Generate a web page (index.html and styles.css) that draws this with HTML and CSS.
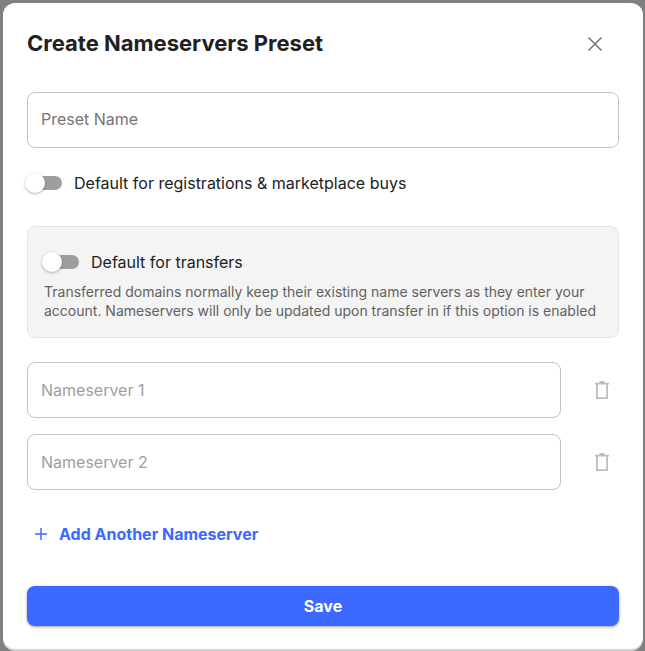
FILE: index.html
```html
<!DOCTYPE html>
<html lang="en">
<head>
<meta charset="utf-8">
<title>Create Nameservers Preset</title>
<link rel="stylesheet" href="styles.css">
</head>
<body>
<div class="modal">
  <header class="head">
    <h1 class="title">Create Nameservers Preset</h1>
    <button class="close" aria-label="Close">
      <svg width="16" height="16" viewBox="0 0 16 16"><path d="M1.500 1.500l13 13M14.500 1.500l-13 13" stroke="#757575" stroke-width="1.500" fill="none"/></svg>
    </button>
  </header>
  <div class="field name">Preset Name</div>
  <div class="toggle-row first">
    <span class="toggle"><span class="knob"></span></span>
    <span class="toggle-label">Default for registrations &amp; marketplace buys</span>
  </div>
  <section class="panel">
    <div class="toggle-row">
      <span class="toggle"><span class="knob"></span></span>
      <span class="toggle-label">Default for transfers</span>
    </div>
    <p class="note">Transferred domains normally keep their existing name servers as they enter your account. Nameservers will only be updated upon transfer in if this option is enabled</p>
  </section>
  <div class="ns-list">
    <div class="ns-row">
      <div class="field ns">Nameserver 1</div>
      <svg class="trash" width="14" height="18" viewBox="0 0 14 18"><path d="M0 2.600h14M4.500 1h5M1.900 3v14.100h10.200V3" fill="none" stroke="#bdbdbd" stroke-width="1.800"/></svg>
    </div>
    <div class="ns-row">
      <div class="field ns">Nameserver 2</div>
      <svg class="trash" width="14" height="18" viewBox="0 0 14 18"><path d="M0 2.600h14M4.500 1h5M1.900 3v14.100h10.200V3" fill="none" stroke="#bdbdbd" stroke-width="1.800"/></svg>
    </div>
  </div>
  <div class="add">
    <svg width="12" height="12" viewBox="0 0 12 12"><path d="M6 0v12M0 6h12" stroke="#3b68ff" stroke-width="1.500" fill="none"/></svg>
    <span>Add Another Nameserver</span>
  </div>
  <button class="save">Save</button>
</div>
</body>
</html>
```
FILE: styles.css
```css
* { box-sizing: border-box; }
html, body { margin: 0; height: 100%; }
body {
  background: #808080;
  font-family: Inter, "Liberation Sans", sans-serif;
  padding: 3px 2px 2px 3px;
  overflow: hidden;
}
.modal {
  height: 646px;
  background: #fff;
  border-radius: 12px;
  padding: 0 24px;
  display: flex;
  flex-direction: column;
  box-shadow: 0 2px 0 #d0d0d0;
}
.head {
  height: 89px;
  display: flex;
  align-items: center;
  justify-content: space-between;
  padding-bottom: 8px;
}
.title {
  margin: 0 0 2px;
  font-size: 22px;
  font-weight: 700;
  color: #212121;
}
.close {
  border: 0;
  background: none;
  padding: 0;
  margin-right: 16px;
  display: flex;
}
.field {
  height: 56px;
  border: 1px solid #c4c4c4;
  border-radius: 8px;
  padding: 0 13px;
  display: flex;
  align-items: center;
  font-size: 16px;
  color: #757575;
}
.field.name { padding-bottom: 2px; }
.toggle-row { display: flex; align-items: center; gap: 12px; }
.toggle-row.first { margin-top: 22px; height: 26px; }
.toggle {
  position: relative;
  width: 35px;
  height: 14px;
  border-radius: 7px;
  background: #9e9e9e;
  flex: none;
}
.knob {
  position: absolute;
  left: -2px;
  top: -3px;
  width: 20px;
  height: 20px;
  border-radius: 50%;
  background: #fff;
  box-shadow: 0 1px 3px rgba(0, 0, 0, .3);
}
.toggle-label { font-size: 16px; color: #212121; }
.panel {
  margin-top: 30px;
  height: 112px;
  background: #f4f4f4;
  border: 1px solid #e4e4e4;
  border-radius: 8px;
  padding: 23px 16px 0;
}
.panel .toggle-row { height: 24px; }
.note {
  margin: 8px 0 0;
  font-size: 14px;
  line-height: 19px;
  color: #616161;
}
.ns-list { margin-top: 24px; display: flex; flex-direction: column; gap: 16px; }
.ns-row { display: flex; align-items: center; }
.field.ns { width: 534px; color: #9e9e9e; }
.trash { margin-left: 34px; }
.add {
  margin-top: 35px;
  height: 17px;
  margin-left: 8px;
  display: flex;
  align-items: center;
  gap: 12px;
  font-size: 16px;
  font-weight: 700;
  color: #3b68ff;
}
.save {
  margin-top: 44px;
  height: 40px;
  border: 0;
  border-radius: 8px;
  background: #3b68ff;
  color: #fff;
  font: 700 16px Inter, "Liberation Sans", sans-serif;
  box-shadow: 0 1px 3px rgba(0, 0, 0, .4);
}
```
